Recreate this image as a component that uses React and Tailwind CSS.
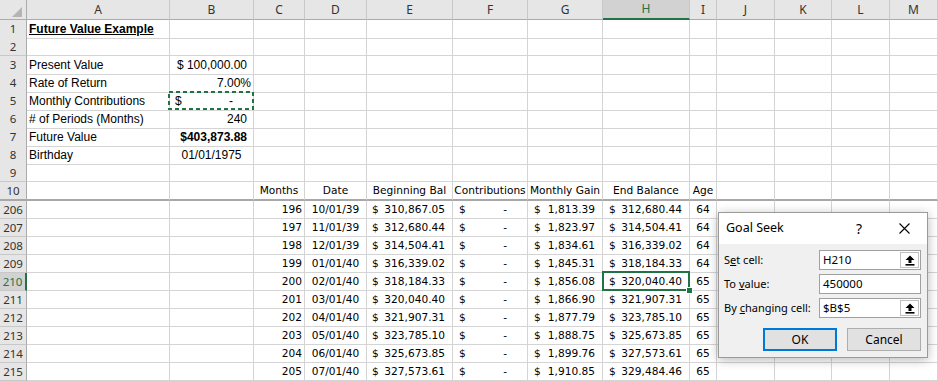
import React from "react";

const COLS =
  "grid grid-cols-[27px_143px_84px_51px_62px_86px_75px_75px_87px_27px_58px_57px_58px_1fr]";
const LETTERS = ["A", "B", "C", "D", "E", "F", "G", "H", "I", "J", "K", "L", "M"];

const ARIAL = "font-['Liberation_Sans',Arial,sans-serif] text-[12px]";
const TAHOMA = "font-['DejaVu_Sans',Verdana,sans-serif] text-[10.6px]";
const UI = "font-['Noto_Sans',sans-serif]";

function Cell({ children, className = "", bottom = "border-b border-b-[#d4d4d4]" }) {
  return (
    <div
      className={`flex items-center whitespace-nowrap min-w-0 text-black border-r border-r-[#d4d4d4] ${bottom} ${className}`}
    >
      {children}
    </div>
  );
}

function Acct({ v, pl = "pl-[6px]", pr = "pr-[7px]", font }) {
  return (
    <div className={`flex w-full justify-between ${pl} ${pr} ${font}`}>
      <span>$</span>
      <span>{v}</span>
    </div>
  );
}

function RowHead({ n, sel, bottom }) {
  return (
    <div
      className={`flex items-center justify-center ${UI} text-[11.5px] ${
        sel
          ? "bg-[#d2d2d2] text-[#217346] border-r-2 border-r-[#217346]"
          : "bg-[#e6e6e6] text-[#333] border-r border-r-[#ababab]"
      } ${bottom}`}
    >
      {n}
    </div>
  );
}

function TopRow({ n, a, b }) {
  return (
    <div className={`${COLS} h-[18px]`}>
      <RowHead n={n} bottom="border-b border-b-[#c8c8c8]" />
      <Cell className={`pl-[2px] ${ARIAL}`}>{a}</Cell>
      <Cell className={ARIAL}>{b}</Cell>
      {LETTERS.slice(2).map((l) => (
        <Cell key={l} />
      ))}
    </div>
  );
}

const DATA = [
  [206, 196, "10/01/39", "310,867.05", "1,813.39", "312,680.44", 64],
  [207, 197, "11/01/39", "312,680.44", "1,823.97", "314,504.41", 64],
  [208, 198, "12/01/39", "314,504.41", "1,834.61", "316,339.02", 64],
  [209, 199, "01/01/40", "316,339.02", "1,845.31", "318,184.33", 64],
  [210, 200, "02/01/40", "318,184.33", "1,856.08", "320,040.40", 65],
  [211, 201, "03/01/40", "320,040.40", "1,866.90", "321,907.31", 65],
  [212, 202, "04/01/40", "321,907.31", "1,877.79", "323,785.10", 65],
  [213, 203, "05/01/40", "323,785.10", "1,888.75", "325,673.85", 65],
  [214, 204, "06/01/40", "325,673.85", "1,899.76", "327,573.61", 65],
  [215, 205, "07/01/40", "327,573.61", "1,910.85", "329,484.46", 65],
];

function DataRow({ r }) {
  const [n, m, d, beg, gain, end, age] = r;
  return (
    <div className={`${COLS} h-[18px]`}>
      <RowHead n={n} sel={n === 210} bottom="border-b border-b-[#c8c8c8]" />
      <Cell />
      <Cell />
      <Cell className={`justify-end pr-[2px] ${TAHOMA}`}>{m}</Cell>
      <Cell className={`justify-center ${TAHOMA}`}>{d}</Cell>
      <Cell className={TAHOMA}>
        <Acct v={beg} pl="pl-[5px]" pr="pr-[7px]" />
      </Cell>
      <Cell className={TAHOMA}>
        <Acct v="-" pl="pl-[6px]" pr="pr-[20px]" />
      </Cell>
      <Cell className={TAHOMA}>
        <Acct v={gain} pl="pl-[6px]" pr="pr-[7px]" />
      </Cell>
      <Cell className={TAHOMA}>
        <Acct v={end} pl="pl-[6px]" pr="pr-[7px]" />
      </Cell>
      <Cell className={`justify-center ${TAHOMA}`}>{age}</Cell>
      {LETTERS.slice(9).map((l) => (
        <Cell key={l} />
      ))}
    </div>
  );
}

function CollapseIcon() {
  return (
    <svg width="10" height="11" viewBox="0 0 10 11">
      <polygon points="5,0.5 9.5,5 6.5,5 6.5,8 3.5,8 3.5,5 0.5,5" fill="#000" />
      <rect x="0.5" y="9" width="9" height="1.6" fill="#000" />
    </svg>
  );
}

function Field({ label, value, collapse }) {
  return (
    <div className="flex items-center h-[20px]">
      <div className={`w-[95px] text-[11px] text-black ${UI}`}>{label}</div>
      <div className="flex items-center w-[102px] h-[20px] bg-white border border-[#a0a0a0]">
        <div className={`flex-1 pl-[3px] text-[11.5px] text-black ${UI}`}>{value}</div>
        {collapse && (
          <div className="flex items-center justify-center w-[19px] h-[16px] mr-[1px] bg-white border border-[#c0c0c0]">
            <CollapseIcon />
          </div>
        )}
      </div>
    </div>
  );
}

function GoalSeek() {
  return (
    <div className="absolute left-[718px] top-[212px] w-[210px] h-[146px] border border-[#9a9a9a] bg-[#f0f0f0] shadow-[0_2px_10px_rgba(0,0,0,0.28)] flex flex-col">
      <div className="h-[31px] bg-white flex items-center pl-[7px] pr-[17px]">
        <div className={`flex-1 text-[12.5px] text-black ${UI}`}>Goal Seek</div>
        <div className={`w-[10px] text-[14px] text-black ${UI} mr-[33px]`}>?</div>
        <svg width="11" height="11" viewBox="0 0 11 11">
          <path d="M0.5 0.5 L10.5 10.5 M10.5 0.5 L0.5 10.5" stroke="#000" strokeWidth="1.1" />
        </svg>
      </div>
      <div className="flex flex-col gap-[4px] pl-[5px] pt-[6px]">
        <Field
          label={
            <span>
              S<u>e</u>t cell:
            </span>
          }
          value="H210"
          collapse
        />
        <Field
          label={
            <span>
              To <u>v</u>alue:
            </span>
          }
          value="450000"
        />
        <Field
          label={
            <span>
              By <u>c</u>hanging cell:
            </span>
          }
          value="$B$5"
          collapse
        />
      </div>
      <div className="flex justify-end gap-[10px] pr-[6px] pt-[10px]">
        <div
          className={`w-[74px] h-[23px] flex items-center justify-center bg-[#e1e1e1] border-2 border-[#0078d7] text-[12px] text-black ${UI}`}
        >
          OK
        </div>
        <div
          className={`w-[74px] h-[23px] flex items-center justify-center bg-[#e1e1e1] border border-[#adadad] text-[12px] text-black ${UI}`}
        >
          Cancel
        </div>
      </div>
    </div>
  );
}

export default function App() {
  return (
    <div className="relative w-[938px] h-[381px] overflow-hidden bg-white">
      {/* Column header */}
      <div className={`${COLS} h-[20px]`}>
        <div className="bg-[#e6e6e6] border-r border-r-[#ababab] border-b border-b-[#ababab] flex items-end justify-end pr-[4px] pb-[2px]">
          <svg width="10" height="10" viewBox="0 0 10 10">
            <polygon points="10,0 10,10 0,10" fill="#b4b4b4" />
          </svg>
        </div>
        {LETTERS.map((l) => {
          const sel = l === "H";
          return (
            <div
              key={l}
              className={`flex items-center justify-center text-[12px] ${UI} border-r border-r-[#c8c8c8] ${
                sel
                  ? "bg-[#d2d2d2] text-[#217346] border-b-2 border-b-[#217346]"
                  : "bg-[#e6e6e6] text-[#333] border-b border-b-[#ababab]"
              }`}
            >
              {l}
            </div>
          );
        })}
      </div>

      <TopRow n={1} a={<span className="font-bold underline">Future Value Example</span>} />
      <TopRow n={2} />
      <TopRow
        n={3}
        a="Present Value"
        b={
          <div className="flex w-full justify-between pl-[7px] pr-[6px]">
            <span>$</span>
            <span>100,000.00</span>
          </div>
        }
      />
      <TopRow n={4} a="Rate of Return" b={<div className="w-full text-right pr-[2px]">7.00%</div>} />
      <TopRow
        n={5}
        a="Monthly Contributions"
        b={
          <div className="flex w-full justify-between pl-[5px] pr-[20px]">
            <span>$</span>
            <span>-</span>
          </div>
        }
      />
      <TopRow n={6} a="# of Periods (Months)" b={<div className="w-full text-right pr-[6px]">240</div>} />
      <TopRow
        n={7}
        a="Future Value"
        b={<div className="w-full text-right pr-[6px] font-bold">$403,873.88</div>}
      />
      <TopRow n={8} a="Birthday" b={<div className="w-full text-center">01/01/1975</div>} />
      <TopRow n={9} />

      {/* Row 10: table headers with freeze line */}
      <div className={`${COLS} h-[19px]`}>
        <RowHead n={10} bottom="border-b-2 border-b-[#a8a8a8]" />
        {[
          "",
          "",
          "Months",
          "Date",
          "Beginning Bal",
          "Contributions",
          "Monthly Gain",
          "End Balance",
          "Age",
          "",
          "",
          "",
          "",
        ].map((t, i) => (
          <Cell key={i} bottom="border-b-2 border-b-[#a8a8a8]" className={`justify-center ${TAHOMA}`}>
            {t}
          </Cell>
        ))}
      </div>

      {DATA.map((r) => (
        <DataRow key={r[0]} r={r} />
      ))}

      {/* Copy marquee around B5 */}
      <svg className="absolute left-[168px] top-[91px]" width="86" height="19" viewBox="0 0 86 19">
        <rect
          x="1"
          y="1"
          width="84"
          height="17"
          fill="none"
          stroke="#217346"
          strokeWidth="2"
          strokeDasharray="4 3"
        />
      </svg>

      {/* Active cell H210 */}
      <div className="absolute left-[602px] top-[271px] w-[88px] h-[20px] border-2 border-[#217346]" />
      <div className="absolute left-[686px] top-[287px] w-[7px] h-[7px] bg-[#217346] border border-white" />

      <GoalSeek />
    </div>
  );
}
